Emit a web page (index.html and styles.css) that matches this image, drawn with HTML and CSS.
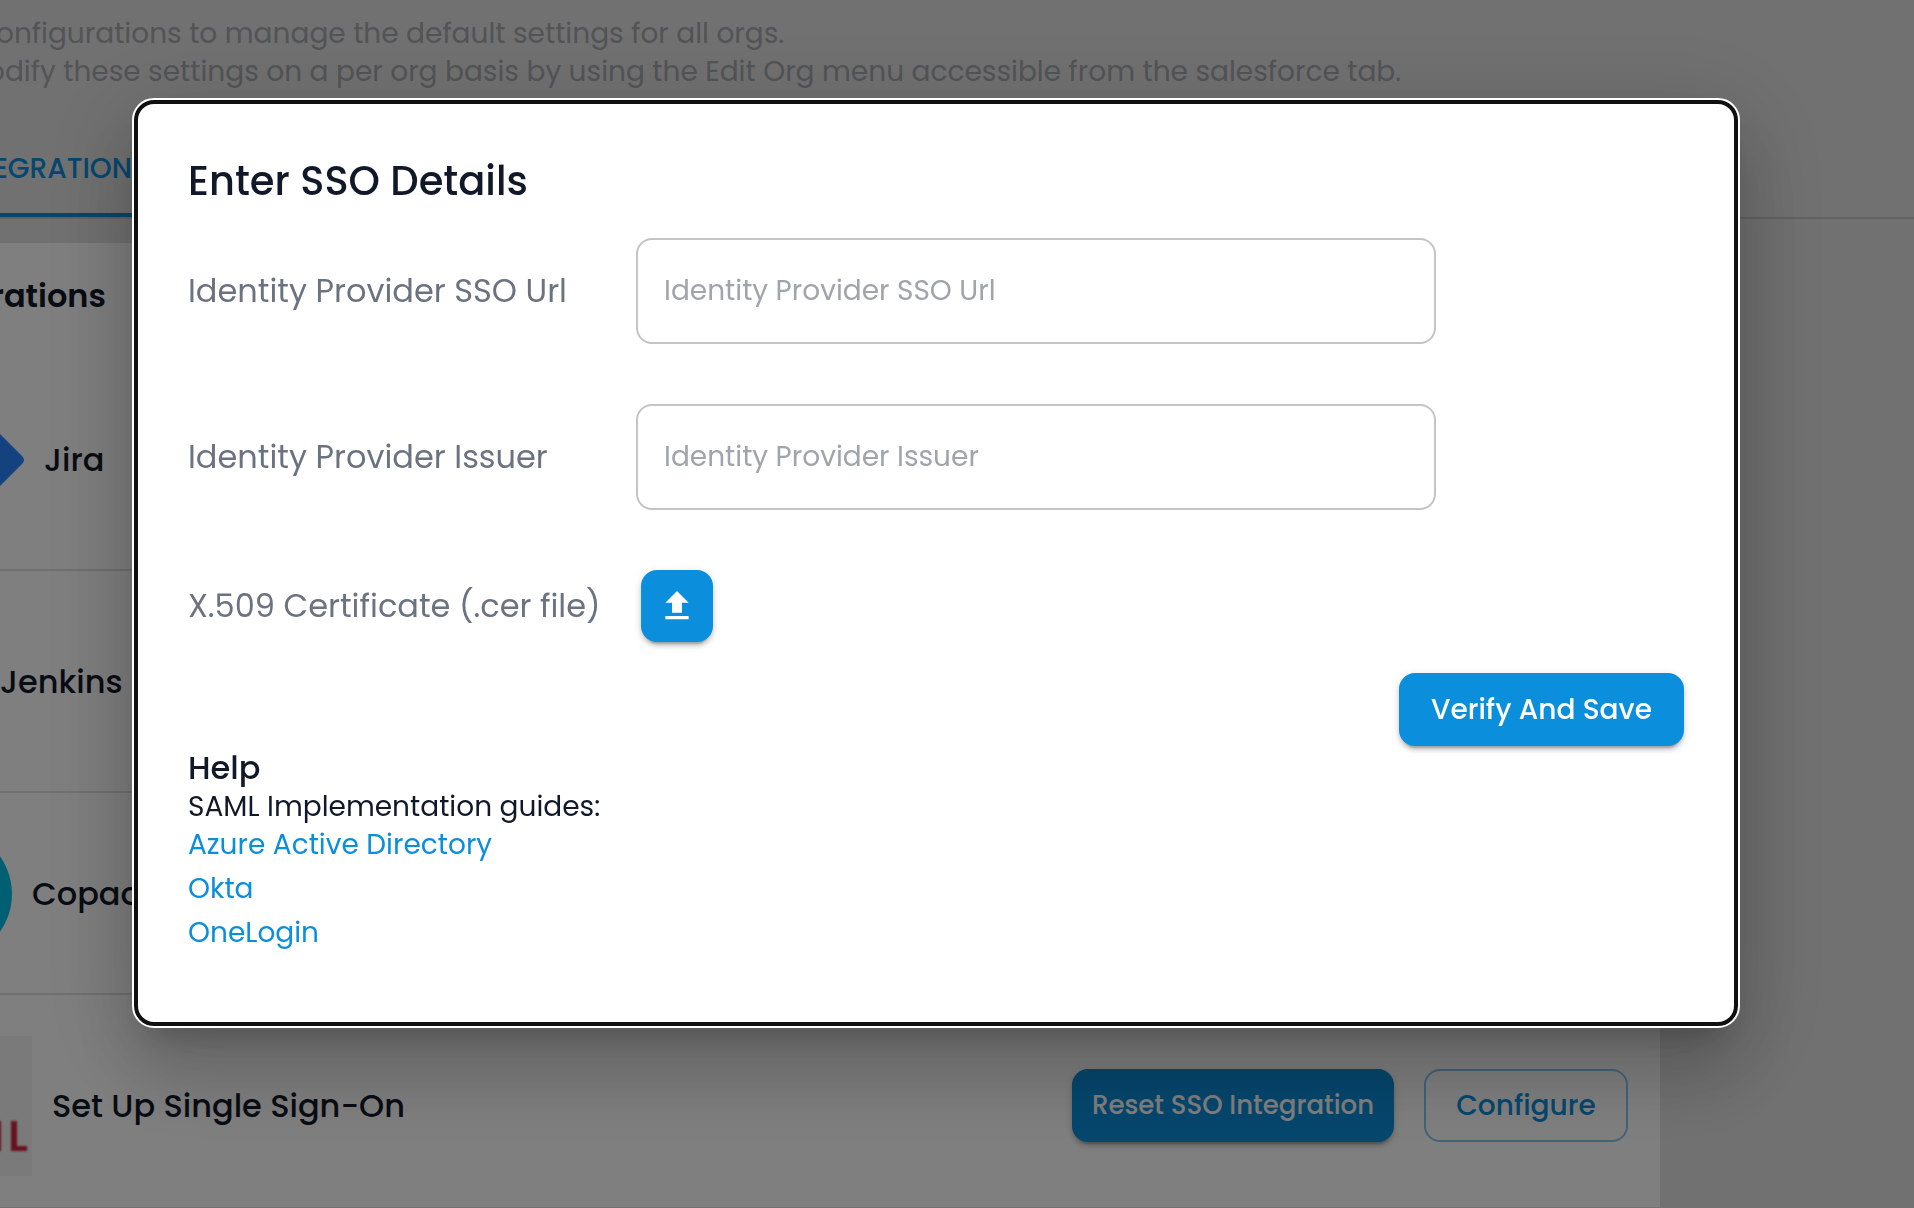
FILE: index.html
```html
<!DOCTYPE html>
<html lang="en">
<head>
  <meta charset="utf-8">
  <meta name="viewport" content="width=device-width, initial-scale=1">
  <title>Integrations</title>
  <link rel="stylesheet" href="styles.css">
</head>
<body>
  <main class="page">
    <div class="intro">
      <p>onfigurations to manage the default settings for all orgs.</p>
      <p class="bleed">odify these settings on a per org basis by using the Edit Org menu accessible from the salesforce tab.</p>
    </div>
    <nav class="tabs">
      <a class="tab" href="#integrations">EGRATION</a>
    </nav>
    <section class="card" id="integrations">
      <h2 class="card-title bleed">rations</h2>
      <ul class="list">
        <li class="row row-jira">
          <svg class="logo" width="24" height="80" viewBox="0 0 24 80" aria-hidden="true"><path d="M0 14 L22 36 Q26 40 22 44 L0 66Z" fill="#2684ff"/></svg>
          <span>Jira</span>
        </li>
        <li class="row row-jenkins"><span>Jenkins</span></li>
        <li class="row row-copado">
          <svg class="logo" width="12" height="130" viewBox="0 0 12 130" aria-hidden="true"><circle cx="-53" cy="65" r="65" fill="#00bfe6"/></svg>
          <span>Copad</span>
        </li>
        <li class="row row-sso">
          <svg class="logo" width="32" height="140" viewBox="0 0 32 140" aria-hidden="true"><rect width="32" height="140" fill="#f5f5f5"/><path class="logo-mark" d="M-6 85h7v30h-7zM11 85h6v25h10v5H11z" fill="#cc2238"/></svg>
          <span>Set Up Single Sign-On</span>
          <div class="actions">
            <button class="btn btn-reset" type="button">Reset SSO Integration</button>
            <button class="btn btn-outline" type="button">Configure</button>
          </div>
        </li>
      </ul>
    </section>
  </main>

  <div class="backdrop">
    <div class="dialog" role="dialog" aria-modal="true" aria-labelledby="dialog-title">
      <h1 class="dialog-title" id="dialog-title">Enter SSO Details</h1>
      <form class="form" id="sso-form">
        <label for="sso-url">Identity Provider SSO Url</label>
        <input class="field" id="sso-url" type="text" placeholder="Identity Provider SSO Url">
        <label for="issuer">Identity Provider Issuer</label>
        <input class="field" id="issuer" type="text" placeholder="Identity Provider Issuer">
        <label for="certificate">X.509 Certificate (.cer file)</label>
        <div class="upload-cell">
          <button class="btn btn-upload" id="certificate" type="button" aria-label="Upload certificate">
            <svg width="40" height="40" viewBox="0 0 24 24" fill="currentColor" aria-hidden="true"><path d="M5 20h14v-2H5v2zm0-10h4v6h6v-6h4l-7-7-7 7z"/></svg>
          </button>
        </div>
      </form>
      <div class="submit">
        <button class="btn btn-save" type="submit" form="sso-form">Verify And Save</button>
      </div>
      <section class="help">
        <h2>Help</h2>
        <p>SAML Implementation guides:</p>
        <ul>
          <li><a href="#azure">Azure Active Directory</a></li>
          <li><a href="#okta">Okta</a></li>
          <li><a href="#onelogin">OneLogin</a></li>
        </ul>
      </section>
    </div>
  </div>
</body>
</html>
```

FILE: styles.css
```css
* {
  box-sizing: border-box;
}

body {
  margin: 0;
  overflow: hidden;
  background: #e2e2e2;
  color: #111827;
  font-family: Poppins, Inter, sans-serif;
  font-size: 28px;
}

h1, h2, p, ul {
  margin: 0;
  padding: 0;
  list-style: none;
}

a {
  color: #0b8edc;
  text-decoration: none;
}

/* Text that runs off the left edge of the scrolled page */
.bleed {
  text-indent: -9px;
}

.intro {
  margin-left: -4px;
  padding: 15px 0 34px;
  color: #a5a8ad;
  line-height: 38px;
  white-space: nowrap;
}

.tabs {
  display: flex;
  border-bottom: 2px solid #c6c6c6;
}

.tab {
  display: flex;
  justify-content: flex-end;
  width: 132px;
  height: 92px;
  padding-top: 25px;
  border-bottom: 4px solid #0b8edc;
  font-weight: 500;
  line-height: 38px;
}

.card {
  margin: 24px 254px 0 0;
  background: #fff;
}

.card-title {
  padding: 29px 0 17px;
  font-size: 32px;
  font-weight: 600;
  line-height: 48px;
}

.row {
  display: flex;
  align-items: center;
  gap: 20px;
  border-bottom: 2px solid #e0e0e0;
  font-size: 32px;
  font-weight: 500;
}

.logo {
  flex: none;
}

.logo-mark {
  filter: blur(1px);
}

.row-jira {
  height: 234px;
  padding-top: 14px;
}

.row-jenkins {
  height: 222px;
  padding-top: 2px;
}

.row-copado {
  height: 202px;
  padding-top: 2px;
}

.row-sso {
  height: 214px;
  padding-top: 9px;
  padding-right: 32px;
}

.actions {
  display: flex;
  gap: 30px;
  margin-left: auto;
}

.btn {
  height: 73px;
  border: 0;
  border-radius: 16px;
  background: #0b8edc;
  color: #fff;
  font: inherit;
  font-size: 28px;
  font-weight: 500;
  white-space: nowrap;
  box-shadow: 0 6px 2px -4px rgba(0, 0, 0, .2), 0 4px 4px rgba(0, 0, 0, .14), 0 2px 10px rgba(0, 0, 0, .12);
}

.btn-reset {
  width: 322px;
  font-size: 26px;
}

.btn-outline {
  width: 204px;
  border: 2px solid #85c7ee;
  background: none;
  color: #0b8edc;
  box-shadow: none;
}

.backdrop {
  position: fixed;
  inset: 0;
  padding: 100px 176px 0 134px;
  background: rgba(0, 0, 0, .5);
}

.dialog {
  padding: 47px 50px 67px;
  border: 4px solid #101010;
  border-radius: 20px;
  outline: 2px solid #fff;
  background: #fff;
  box-shadow: 0 22px 30px -14px rgba(0, 0, 0, .2), 0 48px 76px 6px rgba(0, 0, 0, .14), 0 18px 92px 16px rgba(0, 0, 0, .12);
}

.dialog-title {
  font-size: 40px;
  font-weight: 500;
  line-height: 60px;
}

.form {
  display: grid;
  grid-template-columns: 448px minmax(0, 800px);
  align-items: center;
  row-gap: 60px;
  margin-top: 27px;
  color: #6b7280;
  font-size: 32px;
}

.field {
  width: 100%;
  height: 106px;
  padding: 0 26px;
  border: 2px solid #c4c4c4;
  border-radius: 16px;
  color: #111827;
  font: inherit;
  font-size: 28px;
}

.field::placeholder {
  color: #a0a4ab;
  opacity: 1;
}

.upload-cell {
  display: flex;
  padding-left: 5px;
}

.btn-upload {
  display: flex;
  align-items: center;
  justify-content: center;
  width: 72px;
  height: 72px;
  padding: 0;
}

.submit {
  display: flex;
  justify-content: flex-end;
  margin-top: 31px;
}

.btn-save {
  width: 285px;
}

.help h2 {
  font-size: 32px;
  font-weight: 500;
  line-height: 44px;
}

.help p {
  line-height: 33px;
}

.help li {
  line-height: 44px;
}
```
